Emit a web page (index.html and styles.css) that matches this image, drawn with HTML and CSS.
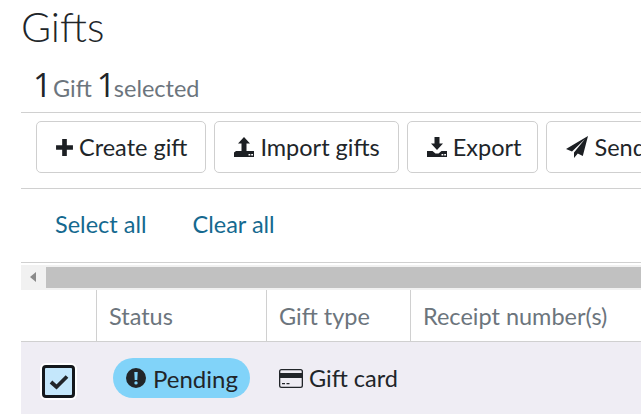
FILE: index.html
```html
<!DOCTYPE html>
<html lang="en">
<head>
<meta charset="utf-8">
<title>Gifts</title>
<link rel="stylesheet" href="styles.css">
</head>
<body>
<main class="page">
  <h1 class="title">Gifts</h1>
  <p class="summary"><span class="num">1</span><span class="lbl">Gift</span><span class="num">1</span><span class="lbl">selected</span></p>
  <div class="toolbar">
    <button class="btn"><svg class="ico" viewBox="0 0 18 18" width="19" height="19"><path d="M6.800 1h4.400v5.800H17v4.400h-5.800V17H6.800v-5.800H1V6.800h5.800z"/></svg>Create gift</button>
    <button class="btn"><svg class="ico" viewBox="0 0 22 22" width="22" height="22"><path d="M11 1l6 6.500h-3.500V15h-5V7.500H5z"/><path fill-rule="evenodd" d="M1 16.500L3 15h18v6H1zM15.500 18v1.500h1.800V18zm2.700 0v1.500H20V18z"/></svg>Import gifts</button>
    <button class="btn btn-export"><svg class="ico" viewBox="0 0 22 22" width="22" height="22"><path d="M8.500 1h5v6.500H17l-6 6.500-6-6.500h3.500z"/><path fill-rule="evenodd" d="M1 15h5.500l3 2.500h3l3-2.500H21v6H1zM15.500 18v1.500h1.800V18zm2.700 0v1.500H20V18z"/></svg>Export</button>
    <button class="btn"><svg class="ico" viewBox="0 0 24 24" width="24" height="24"><path d="M23 1L1 14l6 2.500L20 4 9 17.500V23l3.800-4.500 5 2.500z"/></svg>Send</button>
  </div>
  <div class="links">
    <a class="link" href="#">Select all</a>
    <a class="link" href="#">Clear all</a>
  </div>
  <div class="scrollbar">
    <span class="arrow"></span>
    <span class="thumb"></span>
  </div>
  <div class="thead">
    <div class="th c0"></div>
    <div class="th c1">Status</div>
    <div class="th c2">Gift type</div>
    <div class="th c3">Receipt number(s)</div>
  </div>
  <div class="row">
    <div class="c0 cell-check">
      <span class="check"><svg viewBox="0 0 20 16" width="20" height="16"><path d="M2 8l5.500 5L18 2.500" fill="none" stroke="#212529" stroke-width="3.800"/></svg></span>
    </div>
    <div class="c1 cell-status">
      <span class="badge"><svg class="alert" viewBox="0 0 20 20" width="20" height="20"><path fill-rule="evenodd" d="M10 0a10 10 0 1 1 0 20a10 10 0 0 1 0-20zM8.300 4l.4 8h2.600l.4-8zM10 13.200a1.700 1.700 0 1 0 0 3.400a1.700 1.700 0 0 0 0-3.400z"/></svg>Pending</span>
    </div>
    <div class="c2 cell-type">
      <svg class="card" viewBox="0 0 24 19" width="24" height="19"><path fill-rule="evenodd" d="M2.500 0h19A2.500 2.500 0 0 1 24 2.500v14a2.500 2.500 0 0 1-2.500 2.500h-19A2.500 2.500 0 0 1 0 16.500v-14A2.500 2.500 0 0 1 2.500 0zM2.500 1.300A1.200 1.200 0 0 0 1.300 2.500V4h21.400V2.500a1.200 1.200 0 0 0-1.200-1.200zM1.300 9v7.500a1.200 1.200 0 0 0 1.200 1.200h19a1.200 1.200 0 0 0 1.200-1.200V9zM3 14h3v1.200H3zm4.500 0h3v1.200h-3z"/></svg>Gift card
    </div>
  </div>
</main>
</body>
</html>
```

FILE: styles.css
```css
html, body {
  margin: 0;
  padding: 0;
  height: 100%;
  overflow: hidden;
  background: #fff;
}
body {
  font-family: "Lato", "Liberation Sans", sans-serif;
  color: #212529;
}
.page {
  margin-left: 21px;
  width: 620px;
  overflow: hidden;
}
.title {
  margin: 0;
  height: 60px;
  padding-top: 4px;
  box-sizing: border-box;
  font-size: 41px;
  line-height: 46px;
  font-weight: 300;
}
.summary {
  display: flex;
  align-items: baseline;
  margin: 0;
  height: 52px;
  padding-left: 12px;
  box-sizing: border-box;
  line-height: 50px;
  white-space: nowrap;
}
.num {
  font-family: "Open Sans", sans-serif;
  font-size: 33px;
  font-weight: 400;
  width: 17px;
}
.num:first-child {
  margin-right: 3px;
}
.lbl {
  font-size: 23.500px;
  color: #6c757d;
  margin-right: 5px;
}
.toolbar {
  display: flex;
  gap: 8px;
  height: 77px;
  box-sizing: border-box;
  padding: 8px 0 0 15px;
  border-top: 1px solid #d0d0d0;
  border-bottom: 1px solid #d0d0d0;
}
.btn {
  flex: none;
  display: flex;
  align-items: center;
  justify-content: center;
  gap: 5px;
  height: 52px;
  padding: 0 18px;
  background: #fff;
  border: 1px solid #cfcfcf;
  border-radius: 5px;
  font: inherit;
  font-size: 23.500px;
  color: #212529;
}
.btn-export {
  padding-right: 16px;
}
.ico {
  fill: #1c1f23;
  flex: none;
}
.links {
  display: flex;
  gap: 46px;
  height: 74px;
  box-sizing: border-box;
  padding: 0 0 3px 34px;
  align-items: center;
  border-bottom: 1px solid #d0d0d0;
}
.link {
  font-size: 23.500px;
  color: #15698f;
  text-decoration: none;
}
.scrollbar {
  display: flex;
  height: 25px;
  box-sizing: border-box;
  margin-top: 2px;
  padding: 2px 0;
  background: #f1f1f1;
  align-items: stretch;
}
.arrow {
  flex: none;
  width: 25px;
  position: relative;
}
.arrow::before {
  content: "";
  position: absolute;
  left: 9px;
  top: 5px;
  border-style: solid;
  border-width: 5px 6px 5px 0;
  border-color: transparent #8a8a8a transparent transparent;
}
.thumb {
  flex: 1;
  background: #c1c1c1;
}
.thead {
  display: flex;
  height: 52px;
  box-sizing: border-box;
  border-bottom: 1px solid #d0d0d0;
}
.th {
  box-sizing: border-box;
  display: flex;
  align-items: center;
  padding-left: 12px;
  font-size: 23.500px;
  color: #6c757d;
  border-left: 1px solid #d0d0d0;
  white-space: nowrap;
}
.th.c0 {
  border-left: 0;
}
.c0 { flex: none; width: 75px; }
.c1 { flex: none; width: 170px; }
.c2 { flex: none; width: 144px; }
.c3 { flex: 1; }
.row {
  display: flex;
  height: 72px;
  background: #efedf4;
  align-items: center;
}
.cell-check {
  display: flex;
  justify-content: center;
}
.check {
  width: 33px;
  height: 33px;
  margin-top: 7px;
  box-sizing: border-box;
  display: flex;
  align-items: center;
  justify-content: center;
  background: #c4e7fb;
  border: 3px solid #14181c;
  border-radius: 4px;
  box-shadow: 0 0 0 2px #fff;
}
.cell-status {
  padding-left: 17px;
  box-sizing: border-box;
}
.badge {
  display: inline-flex;
  align-items: center;
  gap: 7px;
  height: 40px;
  padding: 0 12px 0 13px;
  border-radius: 20px;
  background: #81d3f9;
  font-size: 24px;
  color: #212529;
  white-space: nowrap;
}
.alert {
  fill: #212529;
  flex: none;
}
.cell-type {
  display: flex;
  align-items: center;
  gap: 6px;
  padding-left: 13px;
  box-sizing: border-box;
  font-size: 23.500px;
  white-space: nowrap;
}
.card {
  fill: #212529;
  flex: none;
}
```
